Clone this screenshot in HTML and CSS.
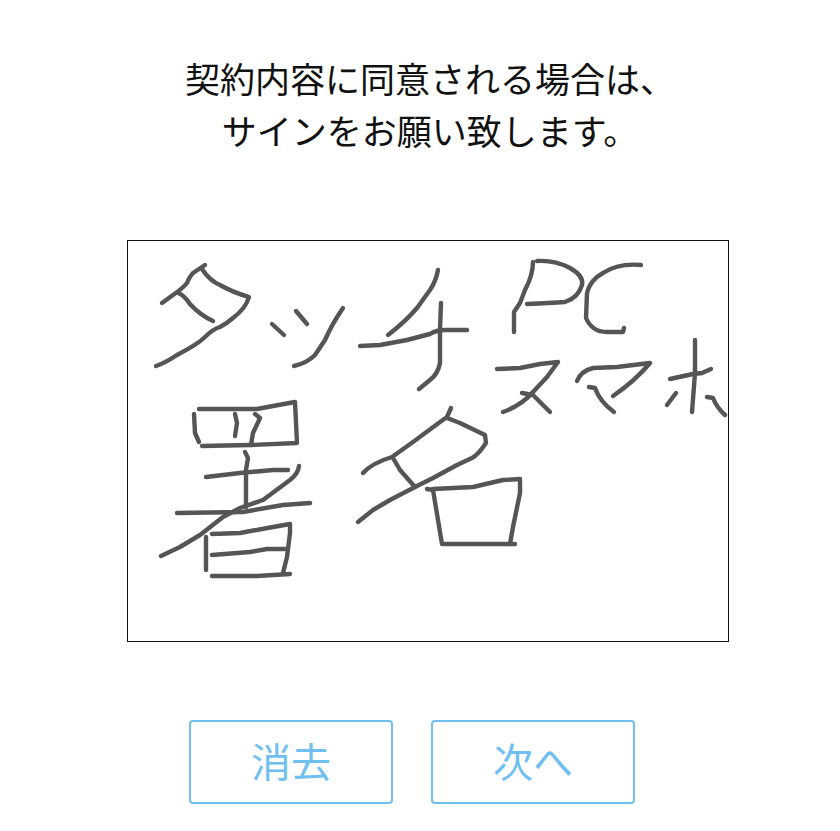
FILE: index.html
```html
<!DOCTYPE html>
<html lang="ja">
<head>
    <meta charset="UTF-8">
    <title>署名</title>
    <link rel="stylesheet" href="styles.css">
</head>
<body>
    <p class="lead">契約内容に同意される場合は、<br>サインをお願い致します。</p>

    <div class="sign-box">
        <svg class="sign-canvas" viewBox="128 241 600 400" width="600" height="400">
            <!-- タ -->
            <path d="M162 303 L173 295 Q183 288 187 283 Q190 276 193 273 L205 265"/>
            <path d="M202 269 Q210 281 220 285 Q232 292 249 297 Q246 308 233 318 Q226 324 220 327 Q213 329 205 337 Q198 344 177 355 Q165 363 156 366"/>
            <path d="M178 293 Q184 295 190 304 Q200 315 213 321"/>
            <!-- ッ -->
            <path d="M272 324 L284 335"/>
            <path d="M296 311 L307 324"/>
            <path d="M343 308 Q332 324 325 340 L315 355 Q307 363 294 366"/>
            <!-- チ -->
            <path d="M388 335 Q405 322 417 308 L430 290 Q436 281 438 270"/>
            <path d="M360 346 L380 345 L407 340 L430 334 Q436 330 446 330 L467 330"/>
            <path d="M441 303 L440 330 L440 363 Q438 374 430 380 L419 389"/>
            <!-- PC -->
            <path d="M533 262 Q533 275 525 290 L520 303 L514 312 L514 332"/>
            <path d="M537 261 Q555 260 570 268 Q584 276 582 285 Q578 298 565 302 Q550 303 527 304"/>
            <path d="M641 265 Q618 263 603 273 Q590 280 587 293 L586 318 Q592 332 607 332 L623 332 L624 328"/>
            <!-- スマホ -->
            <path d="M497 369 L520 368 L540 364 L558 362 L547 377 L533 392 Q522 405 503 412"/>
            <path d="M522 393 L533 395 L550 412"/>
            <path d="M577 381 Q581 371 593 368 L617 367 L650 363 Q635 381 613 396"/>
            <path d="M589 387 L595 388 Q600 402 614 412"/>
            <path d="M695 340 L695 373 L692 412"/>
            <path d="M670 379 L693 374 L702 373 L711 369"/>
            <path d="M676 393 L667 405"/>
            <path d="M707 397 L713 398 Q717 408 725 415"/>
            <!-- 署 -->
            <path d="M199 409 L257 409 L273 406 L295 402 L297 443 L250 445 L202 446"/>
            <path d="M194 414 L195 433 L199 442"/>
            <path d="M235 414 L237 423 L235 436"/>
            <path d="M255 414 L260 418 L253 433 L251 445"/>
            <path d="M245 452 L248 458 L246 470 L246 507"/>
            <path d="M206 477 L240 473 L273 470 L288 470"/>
            <path d="M299 466 Q298 474 290 480 L263 500 L240 508 L223 517 L200 535 L180 547 L161 556"/>
            <path d="M177 513 L243 512 L283 505 L310 503"/>
            <path d="M212 534 L240 533 L273 527 L290 524 L290 533 L287 557 L283 573"/>
            <path d="M206 537 L206 570"/>
            <path d="M212 555 L250 552 L267 549 L285 549"/>
            <path d="M212 576 L257 576 L290 574"/>
            <!-- 名 -->
            <path d="M363 473 Q372 463 392 457 L413 442 L440 422 L447 417 L451 408"/>
            <path d="M447 418 L460 423 L485 435 L486 443 Q478 455 472 458 L457 465 L433 478 L415 487 L390 500 L373 510 L358 522"/>
            <path d="M393 458 L400 470 L415 487"/>
            <path d="M427 489 L433 490 L442 544"/>
            <path d="M433 489 L473 487 L503 480 L520 479 L520 493 L513 527 L510 544"/>
            <path d="M444 544 L515 544"/>
        </svg>
    </div>

    <div class="buttons">
        <button class="btn">消去</button>
        <button class="btn">次へ</button>
    </div>
</body>
</html>
```

FILE: styles.css
```css
body { margin: 0; background: #fff; color: #111; font-family: "Noto Sans CJK JP", "Noto Sans", sans-serif; }
.lead { margin: 0; padding: 52px 0 0 20px; font-size: 35px; line-height: 52px; text-align: center; font-weight: 400; }
.sign-box { width: 600px; height: 400px; margin: 84px 0 0 127px; border: 1px solid #111; }
.sign-canvas { display: block; }
.sign-canvas path { fill: none; stroke: #555; stroke-width: 4.4; stroke-linecap: round; stroke-linejoin: round; }
.buttons { display: flex; gap: 38px; margin: 78px 0 0 189px; }
.btn { width: 204px; height: 84px; padding: 0 0 5px; background: #fff; border: 2px solid #6fc0f0; border-radius: 4px; color: #6fc0f0; font-family: inherit; font-size: 40px; }
```
